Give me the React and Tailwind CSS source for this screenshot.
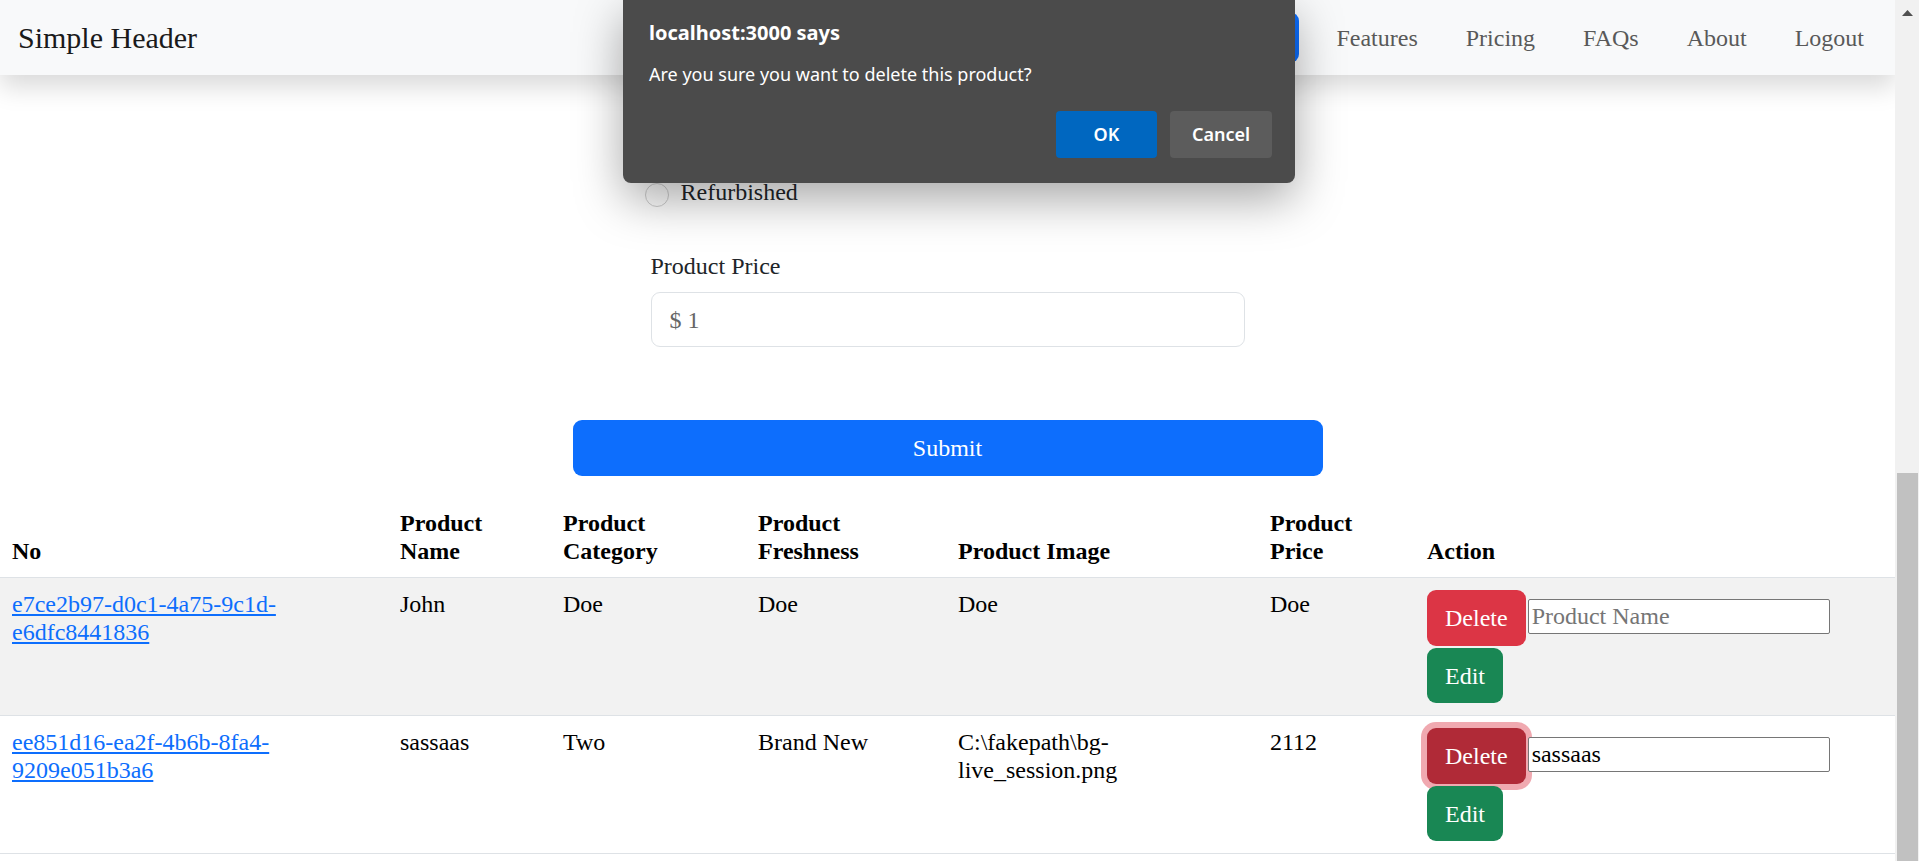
import React from 'react';

const serif = { fontFamily: '"Liberation Serif", "Times New Roman", serif' };
const sans = { fontFamily: '"Noto Sans", "Open Sans", sans-serif' };

const rows = [
  {
    id: ['e7ce2b97-d0c1-4a75-9c1d-', 'e6dfc8441836'],
    name: 'John',
    category: 'Doe',
    freshness: 'Doe',
    image: 'Doe',
    price: 'Doe',
    input: '',
    focused: false,
    striped: true,
  },
  {
    id: ['ee851d16-ea2f-4b6b-8fa4-', '9209e051b3a6'],
    name: 'sassaas',
    category: 'Two',
    freshness: 'Brand New',
    image: 'C:\\fakepath\\bg-live_session.png',
    price: '2112',
    input: 'sassaas',
    focused: true,
    striped: false,
  },
];

function Header() {
  return (
    <header className="relative z-10 h-[75px] bg-[#f8f9fa] shadow-[0_12px_24px_rgba(0,0,0,0.15)] flex items-center justify-between pl-[18px] pr-[31px]">
      <span className="text-[30px] text-[#1a1a1a]">Simple Header</span>
      <nav className="flex items-center">
        {/* button hidden behind the alert */}
        <button className="w-[160px] h-[51px] rounded-[9px] bg-[#0d6efd] text-white text-[24px] mr-[37px]">
          Create
        </button>
        <ul className="flex items-center gap-[48px] text-[24px] text-[#595959]">
          <li>Features</li>
          <li>Pricing</li>
          <li>FAQs</li>
          <li>About</li>
          <li>Logout</li>
        </ul>
      </nav>
    </header>
  );
}

function ProductForm() {
  return (
    <div className="pt-[99px]">
      <div className="w-[594px] mx-auto">
        <div className="flex items-center h-[36px] -ml-[6px] gap-[12px]">
          <span className="w-[24px] h-[24px] rounded-full border border-[#cfcfcf] bg-white mt-[6px]" />
          <span className="text-[24px] text-[#212529]">Refurbished</span>
        </div>
        <label className="block mt-[38px] mb-[8px] text-[24px] leading-[36px] text-[#212529]">Product Price</label>
        <div className="h-[55px] rounded-[9px] border border-[#dee2e6] flex items-center px-[18px] text-[24px] text-[#666]">
          $ 1
        </div>
      </div>
      <div className="flex justify-center mt-[73px]">
        <button className="w-[750px] h-[56px] rounded-[9px] bg-[#0d6efd] text-white text-[24px]">Submit</button>
      </div>
    </div>
  );
}

function ProductTable() {
  const th = 'px-[12px] py-[12px] text-left align-bottom font-bold border-b border-[#dee2e6]';
  const td = 'px-[12px] py-[12px] align-top border-b border-[#dee2e6]';
  return (
    <table className="w-full table-fixed border-collapse mt-[21px] text-[24px] leading-[28px] text-black">
      <colgroup>
        <col className="w-[388px]" />
        <col className="w-[163px]" />
        <col className="w-[195px]" />
        <col className="w-[200px]" />
        <col className="w-[312px]" />
        <col className="w-[157px]" />
        <col />
      </colgroup>
      <thead>
        <tr>
          <th className={th}>No</th>
          <th className={th}>Product Name</th>
          <th className={th}>Product Category</th>
          <th className={th}>Product Freshness</th>
          <th className={th}>Product Image</th>
          <th className={th}>Product Price</th>
          <th className={th}>Action</th>
        </tr>
      </thead>
      <tbody>
        {rows.map((r) => (
          <tr key={r.id[0]} className={r.striped ? 'bg-[#f2f2f2]' : 'bg-white'}>
            <td className={td}>
              <a href="#" className="text-[#0d6efd] underline">
                {r.id[0]}
                <br />
                {r.id[1]}
              </a>
            </td>
            <td className={td}>{r.name}</td>
            <td className={td}>{r.category}</td>
            <td className={td}>{r.freshness}</td>
            <td className={td}>{r.image}</td>
            <td className={td}>{r.price}</td>
            <td className={td}>
              <div className="flex items-start">
                <button
                  className={
                    r.focused
                      ? 'h-[56px] px-[18px] rounded-[9px] bg-[#b02a37] text-white leading-[36px] shadow-[0_0_0_6px_rgba(225,83,97,0.5)]'
                      : 'h-[56px] px-[18px] rounded-[9px] bg-[#dc3545] text-white leading-[36px]'
                  }
                >
                  Delete
                </button>
                <input
                  readOnly
                  value={r.input}
                  placeholder="Product Name"
                  className="relative z-10 ml-[2px] mt-[9px] w-[302px] h-[35px] border border-[#767676] rounded-[2px] bg-white px-[3px] text-[24px] text-black placeholder:text-[#757575] outline-none"
                  style={serif}
                />
              </div>
              <div className="mt-[2px]">
                <button className="h-[55px] px-[18px] rounded-[9px] bg-[#198754] text-white leading-[36px]">Edit</button>
              </div>
            </td>
          </tr>
        ))}
      </tbody>
    </table>
  );
}

function AlertDialog() {
  return (
    <div
      className="absolute z-20 left-[623px] top-0 w-[672px] h-[183px] bg-[#4b4b4b] rounded-b-[8px] shadow-[0_16px_48px_rgba(0,0,0,0.35)] pl-[26px] pr-[23px] text-white"
      style={sans}
    >
      <div className="pt-[18px] text-[20px] leading-[30px] font-bold">localhost:3000 says</div>
      <div className="mt-[13px] text-[18px] leading-[27px]">Are you sure you want to delete this product?</div>
      <div className="flex justify-end gap-[13px] mt-[23px]">
        <button className="w-[101px] h-[47px] rounded-[4px] bg-[#0067c0] text-[18px] font-semibold">OK</button>
        <button className="w-[102px] h-[47px] rounded-[4px] bg-[#5c5c5c] text-[18px] font-semibold">Cancel</button>
      </div>
    </div>
  );
}

function Scrollbar() {
  return (
    <div className="w-[24px] h-full bg-[#f1f1f1] flex flex-col">
      <div className="h-[24px] flex justify-center pt-[10px]">
        <svg width="11" height="6" viewBox="0 0 11 6">
          <polygon points="5.5,0 11,6 0,6" fill="#505050" />
        </svg>
      </div>
      <div className="flex-1 flex flex-col">
        <div className="h-[449px]" />
        <div className="flex-1 ml-[2px] w-[21px] bg-[#c1c1c1]" />
      </div>
    </div>
  );
}

export default function App() {
  return (
    <div className="w-full h-[861px] overflow-hidden flex bg-white" style={serif}>
      <div className="relative flex-1 overflow-hidden">
        <Header />
        <main className="text-[#212529]">
          <ProductForm />
          <ProductTable />
        </main>
        <AlertDialog />
      </div>
      <Scrollbar />
    </div>
  );
}
